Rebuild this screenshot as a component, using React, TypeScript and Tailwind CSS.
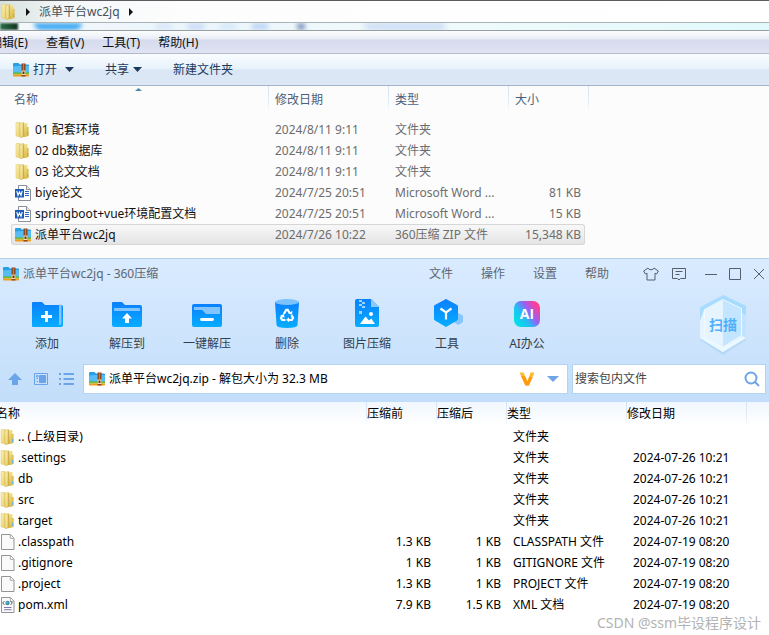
import React from "react";

const columnLine =
  "bg-[linear-gradient(to_bottom,#d3e3f3,#e3edf7_60%,transparent)] bg-[length:1px_100%] bg-right bg-no-repeat";

function FolderIcon() {
  return (
    <svg className="h-4 w-4 shrink-0" viewBox="0 0 16 16" aria-hidden="true">
      <defs>
        <linearGradient id="folderFront" x1="0" x2="1" y1="0" y2="1">
          <stop offset="0" stopColor="#fcf3b8" />
          <stop offset="1" stopColor="#e8cd66" />
        </linearGradient>
        <linearGradient id="folderBack" x1="0" x2="0" y1="0" y2="1">
          <stop offset="0" stopColor="#f1e294" />
          <stop offset="1" stopColor="#d9b846" />
        </linearGradient>
      </defs>
      <path d="M6 1h6.500v13.500L6 15.500z" fill="url(#folderBack)" />
      <path d="M11.500 5H13.700v9h-2.200z" fill="#e0c256" />
      <path d="M1 .6L5 0v14.800L1 14z" fill="url(#folderFront)" stroke="#dcc56b" strokeWidth=".5" />
      <path d="M4.800 1.600L8.600.4v14L5.200 15.700z" fill="url(#folderFront)" stroke="#cdae49" strokeWidth=".5" />
      <path d="M8.300 1.500v13" stroke="#c6a23d" strokeWidth=".8" />
      <path d="M12.600 10v3.200" stroke="#5db7e8" />
    </svg>
  );
}

function ZipIcon() {
  return (
    <svg className="h-4 w-4 shrink-0" viewBox="0 0 16 16" aria-hidden="true">
      <path d="M0 2q0-1 1-1h4.500L7 2.500h8q1 0 1 1V11H0z" fill="#2a9fe9" />
      <path d="M0 4.500L6.500 4H16v6.500H0z" fill="#56bdf5" />
      <path d="M0 10.500h16V12.500H0z" fill="#74bf2c" />
      <path d="M0 12.500h16v1q0 1-1 1H1q-1 0-1-1z" fill="#f39c1c" />
      <path d="M8.500 1.500h4v13h-4z" fill="#8f4a1e" />
      <path d="M10.500 2.500v6" stroke="#e2b47c" strokeWidth="1" strokeDasharray="1 1" />
      <path d="M8.500 8.500h4v4.500h-4z" fill="#f7e3b4" />
      <path d="M9.500 9.500h2v2.500h-2z" fill="#6b3410" />
    </svg>
  );
}

function WordIcon() {
  return (
    <svg className="h-4 w-4 shrink-0" viewBox="0 0 16 16" aria-hidden="true">
      <path d="M3.500.5h8l4 4v11h-12z" fill="#fff" stroke="#8a8f96" />
      <path d="M11.500.5v4h4" fill="#e8e8ea" stroke="#8a8f96" />
      <path d="M10 6.500h4M10 8.500h4M10 10.500h4" stroke="#2b6cc0" />
      <path d="M0 4h9v8.500H0z" fill="#1f5cb5" />
      <path d="M1.800 6l1.200 4.300L4.500 6.800 6 10.300 7.200 6" fill="none" stroke="#fff" strokeWidth="1.100" />
    </svg>
  );
}

function PageIcon({ xml = false }: { xml?: boolean }) {
  return (
    <svg className="h-4 w-4 shrink-0" viewBox="0 0 16 16" aria-hidden="true">
      <path d="M1.500.5h9l3.500 3.500v11.500H1.500z" fill="#fafafa" stroke="#949494" />
      <path d="M10.300.8v3.500h3.500" fill="#fff" stroke="#a5a5a5" />
      {xml && (
        <>
          <path d="M4.300 4.200L2.700 6l1.600 1.800M10.700 4.200L12.300 6l-1.600 1.800" fill="none" stroke="#555" />
          <circle cx="7.500" cy="6" r="2.200" fill="#3a8fb8" />
          <circle cx="7" cy="5.600" r=".8" fill="#77cba0" />
          <path d="M4 10.500h7.500M4 12.700h7.500" stroke="#7f7aa8" />
        </>
      )}
    </svg>
  );
}

function Caret({ className }: { className: string }) {
  return (
    <svg className={className} viewBox="0 0 10 5" preserveAspectRatio="none" aria-hidden="true">
      <path d="M0 0h10L5 5z" fill="currentColor" />
    </svg>
  );
}

function Crumb() {
  return (
    <svg className="h-2 w-1 shrink-0" viewBox="0 0 4 8" aria-hidden="true">
      <path d="M0 0l4 4-4 4z" fill="#111" />
    </svg>
  );
}

type FileRow = { icon: React.ReactNode; name: string; date: string; type: string; size: string; selected?: boolean };

const files: FileRow[] = [
  { icon: <FolderIcon />, name: "01 配套环境", date: "2024/8/11 9:11", type: "文件夹", size: "" },
  { icon: <FolderIcon />, name: "02 db数据库", date: "2024/8/11 9:11", type: "文件夹", size: "" },
  { icon: <FolderIcon />, name: "03 论文文档", date: "2024/8/11 9:11", type: "文件夹", size: "" },
  { icon: <WordIcon />, name: "biye论文", date: "2024/7/25 20:51", type: "Microsoft Word ...", size: "81 KB" },
  { icon: <WordIcon />, name: "springboot+vue环境配置文档", date: "2024/7/25 20:51", type: "Microsoft Word ...", size: "15 KB" },
  { icon: <ZipIcon />, name: "派单平台wc2jq", date: "2024/7/26 10:22", type: "360压缩 ZIP 文件", size: "15,348 KB", selected: true },
];

function Explorer() {
  return (
    <section className="bg-[#fcfcfc] pb-[13px]">
      <div className="flex h-[23px] items-center border-y border-t-[#5c5c60] border-b-[#a9b2b4] bg-[linear-gradient(to_right,#d5e0dc,#f3f6f8_60px,#fdfdfd_180px,#fff)]">
        <span className="ml-px">
          <FolderIcon />
        </span>
        <span className="ml-[9px] flex items-center gap-[9px] text-[#45505b]">
          <Crumb />
          <span>派单平台wc2jq</span>
          <Crumb />
        </span>
      </div>
      <div className="flex h-2 items-stretch overflow-hidden border-b border-[#959ea1] bg-[linear-gradient(to_right,#f4f8fb,#eaf5fb_200px,#f2fafb_400px,#e2fafc)]">
        <span className="w-[18px] bg-[linear-gradient(to_right,#2a6f48,#12301f)] blur-[1px]" />
        <span className="ml-4 w-12 rounded-b-lg bg-[#3fa9f2] blur-[2px]" />
        <span className="ml-[74px] w-4 bg-[#dbe8fa] blur-[2px]" />
        <span className="ml-4 w-4 bg-[#cfdef8] blur-[2px]" />
        <span className="ml-4 w-4 bg-[#d8e9f8] blur-[2px]" />
        <span className="ml-4 w-4 bg-[#c2d8f8] blur-[2px]" />
        <span className="ml-[29px] w-2 bg-[#8d9fc4] blur-[2px]" />
        <span className="ml-[60px] w-20 bg-[#c8daf5] blur-[3px]" />
      </div>

      <nav className="flex h-[23px] items-center gap-[18px] border-b border-[#b3bacb] bg-[linear-gradient(to_bottom,#fcfdfe,#e9ecf5_8px,#d5daed_9px,#e0e4f3)] pt-0.5 text-[#111]">
        <button className="-ml-2.5 whitespace-nowrap">编辑(E)</button>
        <button>查看(V)</button>
        <button>工具(T)</button>
        <button>帮助(H)</button>
      </nav>

      <div className="flex h-8 items-center border-b border-[#a4b5c8] bg-[linear-gradient(to_bottom,#fafdff,#e6f2fb_15px,#dbe6f4_16px,#dde8f6)] pl-[13px] text-[#1e395b]">
        <button className="flex items-center">
          <ZipIcon />
          <span className="ml-1">打开</span>
          <Caret className="ml-2 h-[5px] w-[9px]" />
        </button>
        <button className="ml-[31px] flex items-center">
          共享
          <Caret className="ml-1 h-[5px] w-[9px]" />
        </button>
        <button className="ml-[31px]">新建文件夹</button>
      </div>

      <div className="relative pl-[11px]">
        <Caret className="absolute top-0.5 left-[135px] h-[3px] w-[7px] rotate-180 text-[#4b8aa8]" />
        <table className="w-full table-fixed border-separate border-spacing-0">
          <colgroup>
            <col className="w-[258px]" />
            <col className="w-[120px]" />
            <col className="w-[120px]" />
            <col className="w-[76px]" />
            <col className="w-1" />
            <col />
          </colgroup>
          <thead>
            <tr className="h-[26px] text-left text-[#4c607a] [&>th]:p-0 [&>th]:pt-0.5 [&>th]:font-normal">
              <th className={columnLine}>
                <span className="ml-[3px]">名称</span>
              </th>
              <th className={columnLine}>
                <span className="ml-1.5">修改日期</span>
              </th>
              <th className={columnLine}>
                <span className="ml-1.5">类型</span>
              </th>
              <th>
                <span className="ml-1.5">大小</span>
              </th>
              <th className={columnLine} />
              <th />
            </tr>
            <tr className="h-[7px]">
              <td colSpan={6} />
            </tr>
          </thead>
          <tbody>
            {files.map((f) => (
              <tr
                key={f.name}
                className={
                  f.selected
                    ? "h-[21px] [&>td]:p-0 [&>td:nth-child(-n+4)]:border-y [&>td:nth-child(-n+4)]:border-[#d6d6d6] [&>td:nth-child(-n+4)]:bg-linear-to-b [&>td:nth-child(-n+4)]:from-[#f8f8f8] [&>td:nth-child(-n+4)]:to-[#e4e4e4] [&>td:nth-child(1)]:rounded-l-[3px] [&>td:nth-child(1)]:border-l [&>td:nth-child(4)]:rounded-r-[3px] [&>td:nth-child(4)]:border-r"
                    : "h-[21px] [&>td]:p-0"
                }
              >
                <td>
                  <div className={f.selected ? "flex items-center gap-1 pl-[3px]" : "flex items-center gap-1 pl-1"}>
                    {f.icon}
                    <span className="text-[#111]">{f.name}</span>
                  </div>
                </td>
                <td className="text-[#6d6d6d]">
                  <span className="ml-1.5">{f.date}</span>
                </td>
                <td className="whitespace-nowrap text-[#6d6d6d]">
                  <span className="ml-1.5">{f.type}</span>
                </td>
                <td className="text-right whitespace-nowrap text-[#6d6d6d]">
                  <span className={f.selected ? "mr-[3px]" : "mr-1"}>{f.size}</span>
                </td>
                <td />
                <td />
              </tr>
            ))}
          </tbody>
        </table>
      </div>
    </section>
  );
}

const AddArt = (
  <svg className="h-8 w-8" viewBox="0 0 32 32" aria-hidden="true">
    <path d="M1 5q0-1 1-1h9l3 3h16q2 0 2 2v18q0 2-2 2H2q-1 0-1-1z" fill="url(#blue)" />
    <path d="M28 6.500h1.500q1 0 1 1V25q0 2-2 2H28z" fill="#82c4ff" />
    <path d="M15.500 13v11M10 18.500h11" stroke="#fff" strokeWidth="2.800" />
  </svg>
);
const ExtractArt = (
  <svg className="h-8 w-8" viewBox="0 0 32 32" aria-hidden="true">
    <path d="M1 5q0-1 1-1h9l3 3h15q2 0 2 2v18q0 2-2 2H3q-2 0-2-2z" fill="url(#blue)" />
    <path d="M3 11q0-1 1-1h24q1 0 1 1v2H3z" fill="#82c4ff" />
    <path d="M16 15l5 5.500h-3V25h-4v-4.500h-3z" fill="#fff" />
  </svg>
);
const OneKeyArt = (
  <svg className="h-8 w-8" viewBox="0 0 32 32" aria-hidden="true">
    <path d="M1 8q0-2 2-2h26q2 0 2 2v19q0 2-2 2H3q-2 0-2-2z" fill="url(#blue)" />
    <path d="M3 9h26v7H15l-4-4H3z" fill="#82c4ff" />
    <path d="M10.500 21.500h11" stroke="#fff" strokeWidth="2.800" strokeLinecap="round" />
  </svg>
);
const DeleteArt = (
  <svg className="h-8 w-8" viewBox="0 0 32 32" aria-hidden="true">
    <path d="M4 4h24l-1.500 23q-.2 3-10.500 3T5.500 27z" fill="url(#blue)" />
    <ellipse cx="16" cy="4" rx="12" ry="3" fill="#7cc2fc" />
    <g fill="none" stroke="#fff" strokeWidth="2.200">
      <path d="M12.800 16l2.500-4.200h1.400l2.300 3.700" />
      <path d="M20.500 17l1.500 3-1.200 2h-3.600" />
      <path d="M14.500 22h-3.300L10 20l1.400-2.700" />
    </g>
    <path d="M17.300 15.700l3.700.8.400-3.700zM18 19.300v5l-2.800-2.500zM9.200 17.700l3.700-1.600.6 3.600z" fill="#fff" />
  </svg>
);
const PictureArt = (
  <svg className="h-8 w-8" viewBox="0 0 32 32" aria-hidden="true">
    <path d="M4 3q0-2 2-2h14l8 8v18q0 2-2 2H6q-2 0-2-2z" fill="url(#blue)" />
    <path d="M20 1l8 8h-8z" fill="#8bcafe" />
    <path d="M8 2h3v2H8zM11 4h3v2h-3zM8 6h3v2H8zM11 8h3v2h-3zM8 13h3v3H8z" fill="#9dd3ff" />
    <circle cx="20" cy="16" r="2" fill="#fff" />
    <path d="M9 26l5.500-7.500 3.500 4 2.300-2L24 26z" fill="#fff" />
  </svg>
);
const ToolsArt = (
  <svg className="h-8 w-8" viewBox="0 0 32 32" aria-hidden="true">
    <path d="M27 15l5 2.500v6.500l-4.500 3-5-3z" fill="#86c6fb" />
    <path d="M15 1.500l11.500 6.200v14L15 28.500 3.500 21.700v-14z" fill="url(#blue)" stroke="url(#blue)" strokeLinejoin="round" />
    <path d="M9.500 10.500L15 14.500l5.500-4M15 14.500v7" fill="none" stroke="#fff" strokeWidth="2.200" />
  </svg>
);
const AiArt = (
  <span className="grid h-8 w-8 place-items-center">
    <span className="grid h-[26px] w-[26px] place-items-center rounded-[7px] bg-[linear-gradient(55deg,#00e1e8_10%,#23bdf4_38%,#985ff5_60%,#ff3e91_85%)] font-['Open_Sans'] text-sm leading-4 font-bold text-white">
      AI
    </span>
  </span>
);

const tools = [
  { label: "添加", art: AddArt },
  { label: "解压到", art: ExtractArt },
  { label: "一键解压", art: OneKeyArt },
  { label: "删除", art: DeleteArt },
  { label: "图片压缩", art: PictureArt },
  { label: "工具", art: ToolsArt },
  { label: "AI办公", art: AiArt },
];

function ScanButton() {
  return (
    <button className="relative mr-[22px] grid h-[60px] w-12 place-items-center">
      <svg className="absolute inset-0 h-full w-full overflow-visible" viewBox="0 0 48 60" aria-hidden="true">
        <path d="M24 1l23 11v32L24 59 1 44V12z" fill="#9cc7f3" opacity=".4" transform="translate(0 1)" />
        <path d="M24 0v57L1 43V12z" fill="#e6f5ff" />
        <path d="M24 0l23 11v32L24 57z" fill="#c0e3ff" />
        <path d="M24 0l23 11v9L24 9z" fill="#a6daff" />
        <path d="M24 0L1 12v14l4-11L24 5z" fill="#a9dcff" />
        <path d="M24 4.500l18.500 9V40.500L24 52 5.500 41V14.500z" fill="#c4e5ff" stroke="#eff9ff" />
        <path d="M24 5v46.500L6 40.700V14.800z" fill="#e6f4ff" />
        <path d="M1 43l23 14 23-14-4-2-19 11L5 41z" fill="#eaf8ff" />
      </svg>
      <span className="relative text-sm leading-4 font-bold text-[#52b0fa]">扫描</span>
    </button>
  );
}

function ArchiveHeader() {
  return (
    <header className="border-t border-[#b4cde8] bg-linear-to-b from-[#d9ebff] to-[#c3defa]">
      <svg className="absolute h-0 w-0" aria-hidden="true">
        <linearGradient id="blue" x1="0" x2="0" y1="0" y2="1">
          <stop offset="0" stopColor="#0a80ff" />
          <stop offset="1" stopColor="#07adff" />
        </linearGradient>
      </svg>
      <div className="flex h-[30px] items-center pr-0.5 pl-[3px] text-[#5e6670]">
        <ZipIcon />
        <h1 className="ml-1">派单平台wc2jq - 360压缩</h1>
        <nav className="ml-auto flex gap-7">
          <button>文件</button>
          <button>操作</button>
          <button>设置</button>
          <button>帮助</button>
        </nav>
        <div className="ml-[34px] flex items-center gap-3 text-[#555f6b]">
          <button aria-label="皮肤">
            <svg className="h-4 w-4" viewBox="0 0 16 16" fill="none" stroke="currentColor">
              <path d="M5 2L.7 5l1.600 3 1.700-.8V14h8V7.200l1.700.8 1.600-3L11 2q-.5 1.800-3 1.800T5 2z" />
            </svg>
          </button>
          <button aria-label="反馈">
            <svg className="h-4 w-4" viewBox="0 0 16 16" fill="none" stroke="currentColor">
              <path d="M1.500 2.500h13v10h-5l-1.500 1.500-1.500-1.500h-5zM4.500 5.500h7M4.500 8.500h4" />
            </svg>
          </button>
        </div>
        <div className="ml-4 flex items-center gap-2 text-[#555f6b]">
          <button aria-label="最小化">
            <svg className="h-4 w-4" viewBox="0 0 16 16" stroke="currentColor">
              <path d="M2 8.500h12" />
            </svg>
          </button>
          <button aria-label="最大化">
            <svg className="h-4 w-4" viewBox="0 0 16 16" fill="none" stroke="currentColor">
              <path d="M2.500 2.500h11v11h-11z" />
            </svg>
          </button>
          <button aria-label="关闭">
            <svg className="h-4 w-4" viewBox="0 0 16 16" stroke="currentColor">
              <path d="M3 3l10 10M13 3L3 13" />
            </svg>
          </button>
        </div>
      </div>

      <div className="flex items-center justify-between pt-1.5 pb-[9px] pl-[7px]">
        <div className="flex">
          {tools.map((t) => (
            <button key={t.label} className="flex w-20 flex-col items-center gap-1.5 text-[#333f4d]">
              {t.art}
              <span>{t.label}</span>
            </button>
          ))}
        </div>
        <ScanButton />
      </div>

      <div className="flex items-center pr-[3px] pb-2">
        <div className="flex items-center gap-2.5 pr-2 pl-[7px] text-[#6ca4ea]">
          <button aria-label="上一级">
            <svg className="h-4 w-4" viewBox="0 0 16 16" fill="currentColor">
              <path d="M8 2l7 7h-4v5H5V9H1z" />
            </svg>
          </button>
          <button aria-label="预览">
            <svg className="h-4 w-4" viewBox="0 0 16 16" fill="none" stroke="currentColor">
              <path d="M1.500 2.500h13v11h-13z" />
              <path d="M3.500 4.500h1.500v1.500H3.500zM3.500 7.500h1.500M3.500 10.500h1.500" />
              <path d="M6.500 4.500h6v7h-6z" fill="currentColor" />
            </svg>
          </button>
          <button aria-label="列表">
            <svg className="h-4 w-4" viewBox="0 0 16 16" stroke="currentColor" strokeWidth="2">
              <path d="M0 3h2M0 8h2M0 13h2" />
              <path d="M4.500 3H15M4.500 8H15M4.500 13H15" />
            </svg>
          </button>
        </div>
        <div className="flex h-[30px] grow items-center border border-[#b4d2f1] bg-white pr-2 pl-[5px]">
          <ZipIcon />
          <input
            aria-label="路径"
            readOnly
            value="派单平台wc2jq.zip - 解包大小为 32.3 MB"
            className="ml-1 min-w-0 grow text-black outline-none"
          />
          <svg className="h-4 w-4" viewBox="0 0 16 16" aria-hidden="true">
            <path d="M.5 1.500h4l4 9 3-9h4l-5.700 13H6.500z" fill="#ffb92a" />
            <path d="M2 5h3.800l2.700 5.500L10.200 6h3.500l-3.900 8.500H6.500z" fill="#ff9a0c" />
          </svg>
          <button aria-label="展开" className="ml-3 text-[#70a4e8]">
            <Caret className="h-1.5 w-3" />
          </button>
        </div>
        <div className="ml-1 flex h-[30px] w-[194px] items-center border border-[#b4d2f1] bg-white pr-[5px] pl-0.5">
          <input
            aria-label="搜索"
            placeholder="搜索包内文件"
            className="min-w-0 grow outline-none placeholder:text-[#444]"
          />
          <button aria-label="搜索包内文件" className="text-[#70a4e8]">
            <svg className="h-4 w-4" viewBox="0 0 16 16" fill="none" stroke="currentColor" strokeWidth="2">
              <circle cx="7" cy="7" r="5.500" />
              <path d="M11 11l4 4" />
            </svg>
          </button>
        </div>
      </div>
    </header>
  );
}

const entries = [
  { icon: <FolderIcon />, name: ".. (上级目录)", before: "", after: "", type: "文件夹", date: "" },
  { icon: <FolderIcon />, name: ".settings", before: "", after: "", type: "文件夹", date: "2024-07-26 10:21" },
  { icon: <FolderIcon />, name: "db", before: "", after: "", type: "文件夹", date: "2024-07-26 10:21" },
  { icon: <FolderIcon />, name: "src", before: "", after: "", type: "文件夹", date: "2024-07-26 10:21" },
  { icon: <FolderIcon />, name: "target", before: "", after: "", type: "文件夹", date: "2024-07-26 10:21" },
  { icon: <PageIcon />, name: ".classpath", before: "1.3 KB", after: "1 KB", type: "CLASSPATH 文件", date: "2024-07-19 08:20" },
  { icon: <PageIcon />, name: ".gitignore", before: "1 KB", after: "1 KB", type: "GITIGNORE 文件", date: "2024-07-19 08:20" },
  { icon: <PageIcon />, name: ".project", before: "1.3 KB", after: "1 KB", type: "PROJECT 文件", date: "2024-07-19 08:20" },
  { icon: <PageIcon xml />, name: "pom.xml", before: "7.9 KB", after: "1.5 KB", type: "XML 文档", date: "2024-07-19 08:20" },
];

function ArchiveTable() {
  return (
    <table className="w-full table-fixed border-separate border-spacing-0 text-black">
      <colgroup>
        <col />
        <col className="w-[70px]" />
        <col className="w-[70px]" />
        <col className="w-[120px]" />
        <col className="w-[120px]" />
        <col className="w-[22px]" />
      </colgroup>
      <thead className="bg-linear-to-b from-[#f1f7fe] to-white">
        <tr className="h-6 text-left [&>th]:p-0 [&>th]:font-normal">
          <th className={columnLine}>
            <span className="-ml-1">名称</span>
          </th>
          <th className={columnLine}>压缩前</th>
          <th className={columnLine}>压缩后</th>
          <th className={columnLine}>类型</th>
          <th className={columnLine}>修改日期</th>
          <th />
        </tr>
      </thead>
      <tbody>
        {entries.map((e) => (
          <tr key={e.name} className="h-[21px] whitespace-nowrap [&>td]:p-0">
            <td>
              <div className="flex items-center gap-0.5">
                {e.icon}
                <span>{e.name}</span>
              </div>
            </td>
            <td className="text-right">
              <span className="mr-1.5">{e.before}</span>
            </td>
            <td className="text-right">
              <span className="mr-1.5">{e.after}</span>
            </td>
            <td>
              <span className="ml-1.5">{e.type}</span>
            </td>
            <td>
              <span className="ml-1.5">{e.date}</span>
            </td>
            <td />
          </tr>
        ))}
      </tbody>
    </table>
  );
}

export default function App() {
  return (
    <div className="flex min-h-screen flex-col overflow-hidden bg-white font-['Noto_Sans','Noto_Sans_CJK_SC',sans-serif] text-xs">
      <Explorer />
      <main className="relative grow">
        <ArchiveHeader />
        <ArchiveTable />
        <p className="absolute right-2 bottom-1 text-sm leading-4 text-[#b3b3b3]">CSDN @ssm毕设程序设计</p>
      </main>
    </div>
  );
}
